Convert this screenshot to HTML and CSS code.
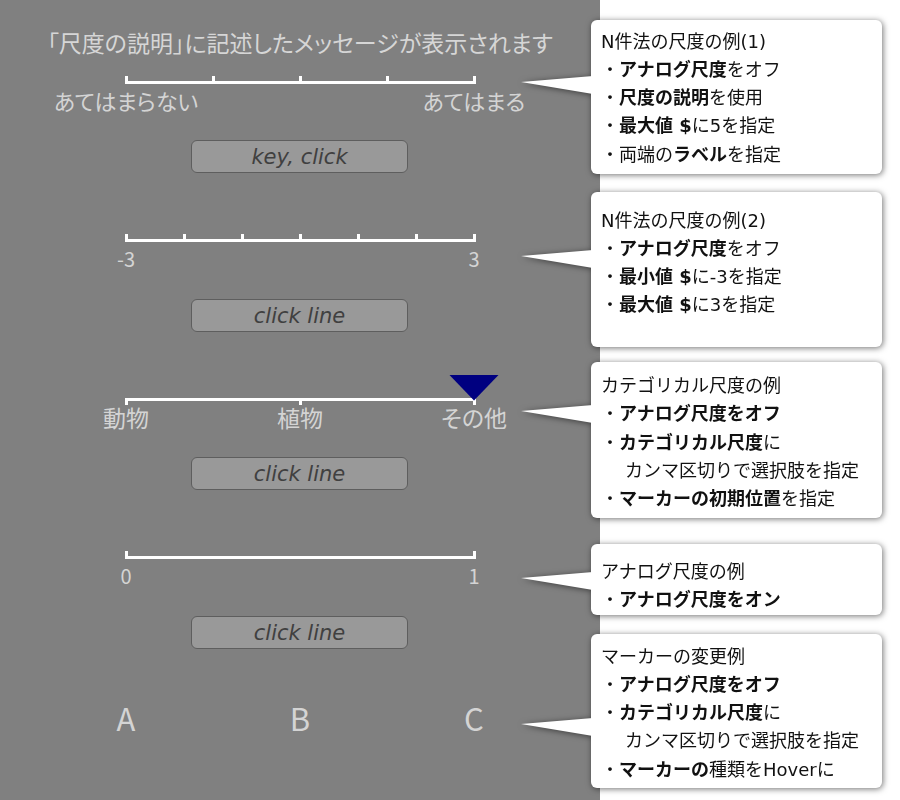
FILE: index.html
```html
<!DOCTYPE html>
<html lang="ja">
<head>
<meta charset="utf-8">
<title>尺度の設定例</title>
<link rel="stylesheet" href="styles.css">
</head>
<body>
<div class="page">
  <main class="stage">
    <p class="caption">「尺度の説明」に記述したメッセージが表示されます</p>

    <section class="item">
      <div class="scale">
        <div class="track"><i class="tick"></i><i class="tick"></i><i class="tick"></i><i class="tick"></i><i class="tick"></i></div>
        <div class="labels labels--words"><span>あてはまらない</span><span>あてはまる</span></div>
      </div>
      <div class="button">key, click</div>
    </section>

    <section class="item">
      <div class="scale">
        <div class="track"><i class="tick"></i><i class="tick"></i><i class="tick"></i><i class="tick"></i><i class="tick"></i><i class="tick"></i><i class="tick"></i></div>
        <div class="labels labels--nums"><span>-3</span><span>3</span></div>
      </div>
      <div class="button">click line</div>
    </section>

    <section class="item">
      <div class="scale">
        <div class="track track--down"><i class="tick"></i><i class="tick"></i><i class="tick"></i><b class="marker"></b></div>
        <div class="labels labels--cats"><span>動物</span><span>植物</span><span>その他</span></div>
      </div>
      <div class="button">click line</div>
    </section>

    <section class="item">
      <div class="scale">
        <div class="track"><i class="tick"></i><i class="tick"></i></div>
        <div class="labels labels--nums"><span>0</span><span>1</span></div>
      </div>
      <div class="button">click line</div>
    </section>

    <section class="item item--letters">
      <div class="scale">
        <div class="labels labels--letters"><span>A</span><span>B</span><span>C</span></div>
      </div>
    </section>
  </main>

  <aside class="notes">
    <div class="note note--1">
      <span class="pointer"></span>
      <p>N件法の尺度の例(1)</p>
      <p>・<b>アナログ尺度</b>をオフ</p>
      <p>・<b>尺度の説明</b>を使用</p>
      <p>・<b>最大値 $</b>に5を指定</p>
      <p>・両端の<b>ラベル</b>を指定</p>
    </div>
    <div class="note note--2">
      <span class="pointer"></span>
      <p>N件法の尺度の例(2)</p>
      <p>・<b>アナログ尺度</b>をオフ</p>
      <p>・<b>最小値 $</b>に-3を指定</p>
      <p>・<b>最大値 $</b>に3を指定</p>
    </div>
    <div class="note note--3">
      <span class="pointer"></span>
      <p>カテゴリカル尺度の例</p>
      <p>・<b>アナログ尺度をオフ</b></p>
      <p>・<b>カテゴリカル尺度</b>に</p>
      <p class="cont">カンマ区切りで選択肢を指定</p>
      <p>・<b>マーカーの初期位置</b>を指定</p>
    </div>
    <div class="note note--4">
      <span class="pointer"></span>
      <p>アナログ尺度の例</p>
      <p>・<b>アナログ尺度をオン</b></p>
    </div>
    <div class="note note--5">
      <span class="pointer"></span>
      <p>マーカーの変更例</p>
      <p>・<b>アナログ尺度をオフ</b></p>
      <p>・<b>カテゴリカル尺度</b>に</p>
      <p class="cont">カンマ区切りで選択肢を指定</p>
      <p>・<b>マーカーの</b>種類をHoverに</p>
    </div>
  </aside>
</div>
</body>
</html>
```

FILE: styles.css
```css
html, body {
  margin: 0;
  padding: 0;
  background: #ffffff;
}

.page {
  display: flex;
  width: 900px;
  height: 800px;
  overflow: hidden;
}

/* ---- left: the rendered scales ---- */
.stage {
  flex: none;
  width: 600px;
  height: 800px;
  background: #808080;
  color: #d4d4d4;
  font-family: "Noto Sans CJK JP", "Noto Sans", sans-serif;
  font-feature-settings: "palt";
}

.caption {
  margin: 27px 0 0;
  height: 30px;
  line-height: 30px;
  font-size: 23px;
  text-align: center;
  color: #d6d6d6;
}

.item {
  box-sizing: border-box;
  height: 158.5px;
  padding-top: 18.5px;
}

.item--letters {
  padding-top: 7px;
}

.scale {
  width: 351px;
  margin: 0 auto;
}

.track {
  position: relative;
  display: flex;
  justify-content: space-between;
  height: 5px;
  border-bottom: 3px solid #ffffff;
}

.tick {
  width: 3px;
  background: #ffffff;
}

/* categorical line: ticks hang below the line */
.track--down {
  height: 4px;
  border-bottom: 0;
  border-top: 3px solid #ffffff;
  margin: 5px 0 -4px;
}

.marker {
  position: absolute;
  top: -26px;
  right: -23.5px;
  width: 50px;
  height: 26px;
  background: #000080;
  clip-path: polygon(0 0, 100% 0, 50% 100%);
}

.labels {
  display: flex;
  justify-content: space-between;
  width: 348px;
  margin: 4.5px auto 0;
  height: 24px;
  line-height: 24px;
  white-space: nowrap;
}

.labels span {
  display: flex;
  justify-content: center;
  width: 0;
}

.labels--words {
  font-size: 22px;
}

.labels--cats {
  font-size: 23px;
}

.labels--nums {
  font-size: 20px;
}

.labels--letters {
  margin-top: 0;
  height: 40px;
  line-height: 40px;
  font-size: 31px;
}

.button {
  box-sizing: border-box;
  display: flex;
  align-items: center;
  justify-content: center;
  width: 217px;
  height: 33px;
  margin: 28px auto 0;
  padding-top: 1px;
  border: 1px solid #5e5e5e;
  border-radius: 6px;
  background: #999999;
  color: #404040;
  font-family: "DejaVu Sans", sans-serif;
  font-style: italic;
  font-size: 21px;
  position: relative;
  left: -0.5px;
}

/* ---- right: explanatory callouts ---- */
.notes {
  flex: none;
  display: flex;
  flex-direction: column;
  width: 291px;
  margin-left: -9px;
  padding-top: 20px;
  font-family: "DejaVu Sans", "Noto Sans CJK JP", sans-serif;
  font-size: 18px;
  line-height: 28.3px;
  color: #111111;
}

.note {
  position: relative;
  box-sizing: border-box;
  padding: 0 10px;
  background: #ffffff;
  border-radius: 6px;
  filter: drop-shadow(1px 1px 3px rgba(0, 0, 0, 0.55));
}

.note p {
  margin: 0;
  white-space: nowrap;
}

.note .cont {
  padding-left: 24px;
}

.note b {
  font-weight: 700;
}

.pointer {
  position: absolute;
  left: -70px;
  width: 72px;
  height: 18px;
  background: #ffffff;
  clip-path: polygon(0 6px, 100% 0, 100% 100%);
}

.note--1 { height: 154px; padding-top: 7.5px; }
.note--1 .pointer { top: 56px; }

.note--2 { height: 155px; margin-top: 18px; padding-top: 14.5px; }
.note--2 .pointer { top: 58px; }

.note--3 { height: 156px; margin-top: 15px; padding-top: 10px; }
.note--3 .pointer { top: 43px; }

.note--4 { height: 71px; margin-top: 26px; padding-top: 13.5px; }
.note--4 .pointer { top: 28px; }

.note--5 { height: 154px; margin-top: 19px; padding-top: 8.5px; }
.note--5 .pointer { top: 84px; }
```
